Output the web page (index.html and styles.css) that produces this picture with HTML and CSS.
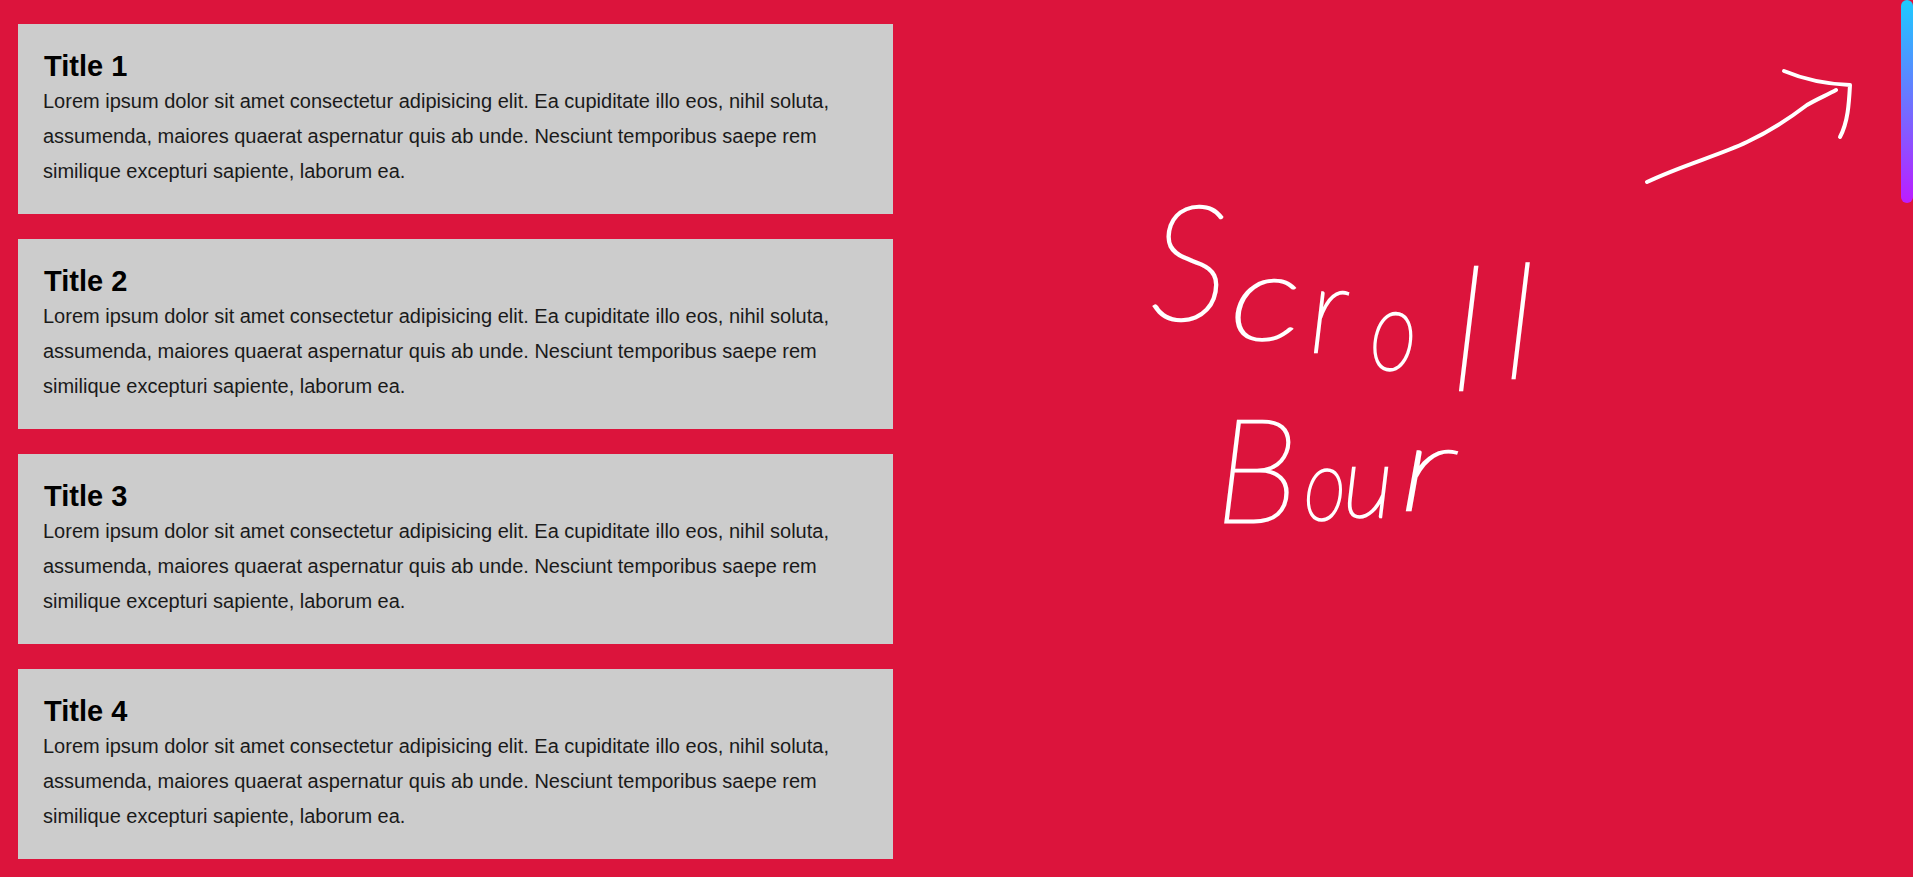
FILE: index.html
```html
<!DOCTYPE html>
<html lang="en">
<head>
<meta charset="utf-8">
<title>Scroll Bar</title>
<link rel="stylesheet" href="styles.css">
</head>
<body>
<main class="list">
  <article class="card"><h2 class="card-title">Title 1</h2><p class="card-text">Lorem ipsum dolor sit amet consectetur adipisicing elit. Ea cupiditate illo eos, nihil soluta, assumenda, maiores quaerat aspernatur quis ab unde. Nesciunt temporibus saepe rem similique excepturi sapiente, laborum ea.</p></article>
  <article class="card"><h2 class="card-title">Title 2</h2><p class="card-text">Lorem ipsum dolor sit amet consectetur adipisicing elit. Ea cupiditate illo eos, nihil soluta, assumenda, maiores quaerat aspernatur quis ab unde. Nesciunt temporibus saepe rem similique excepturi sapiente, laborum ea.</p></article>
  <article class="card"><h2 class="card-title">Title 3</h2><p class="card-text">Lorem ipsum dolor sit amet consectetur adipisicing elit. Ea cupiditate illo eos, nihil soluta, assumenda, maiores quaerat aspernatur quis ab unde. Nesciunt temporibus saepe rem similique excepturi sapiente, laborum ea.</p></article>
  <article class="card"><h2 class="card-title">Title 4</h2><p class="card-text">Lorem ipsum dolor sit amet consectetur adipisicing elit. Ea cupiditate illo eos, nihil soluta, assumenda, maiores quaerat aspernatur quis ab unde. Nesciunt temporibus saepe rem similique excepturi sapiente, laborum ea.</p></article>
</main>
<div class="thumb"></div>
<svg class="ink-arrow" width="1913" height="877" viewBox="0 0 1913 877" fill="none" aria-hidden="true">
  <path d="M1647 182C1680 166 1720 155 1747 142C1770 131 1790 118 1807 105C1817 99 1827 95 1836 90"/>
  <path d="M1784 71C1803 79 1825 84 1850 85C1849 103 1848 122 1840 137"/>
</svg>
<div class="word word-scroll"><span class="g-s">S</span><span class="g-c">c</span><span class="g-r">r</span><span class="g-o">o</span><span class="g-l1">l</span><span class="g-l2">l</span></div>
<div class="word word-bour"><span class="g-b">B</span><span class="g-o2">o</span><span class="g-u">u</span><span class="g-r2">r</span></div>
</body>
</html>
```
FILE: styles.css
```css
html, body {
  margin: 0;
  height: 100%;
  overflow: hidden;
}

body {
  background: #dc143c;
  font-family: "Liberation Sans", Arial, sans-serif;
}

.list {
  display: flex;
  flex-direction: column;
  gap: 25px;
  width: 875px;
  padding: 24px 0 0 18px;
}

.card {
  height: 190px;
  box-sizing: border-box;
  padding: 25px;
  background: #ccc;
}

.card-title {
  margin: 0;
  padding-left: 1px;
  font-size: 29px;
  line-height: 35px;
  font-weight: 700;
  color: #000;
}

.card-text {
  margin: 0;
  font-size: 20px;
  line-height: 35px;
  color: #1a1a1a;
}

.thumb {
  position: absolute;
  top: 0;
  right: 0;
  width: 12px;
  height: 203px;
  border-radius: 6px;
  background: linear-gradient(to bottom, #1ccbff, #bd1cff);
}

.ink-arrow {
  position: absolute;
  inset: 0;
  pointer-events: none;
}

.ink-arrow path {
  stroke: #fff;
  stroke-width: 4;
  stroke-linecap: round;
  stroke-linejoin: round;
}

.word {
  position: absolute;
  display: flex;
  align-items: baseline;
  font-family: Lato, "Noto Sans", sans-serif;
  font-weight: 100;
  font-style: italic;
  line-height: 0.75;
  color: #fff;
  -webkit-text-stroke: 2.5px #fff;
}

.word span {
  display: block;
  transform-origin: 0 100%;
}

.word-scroll { left: 1150px; top: 191px; }
.word-bour { left: 1215px; top: 412px; }

.g-s { font-size: 160px; }
.g-c { font-size: 120px; margin-left: 2px; transform: translateY(20px) scaleX(1.3); }
.g-r { font-size: 120px; margin-left: 24px; transform: translateY(32px); }
.g-o { font-size: 115px; margin-left: 23px; transform: translateY(50px) scaleX(0.8); }
.g-l1 { font-size: 170px; margin-left: 22px; transform: translateY(70px); }
.g-l2 { font-size: 158px; margin-left: 20px; transform: translateY(58px); }

.g-b { font-size: 145px; }
.g-o2 { font-size: 103px; margin-left: 6px; transform: translateY(-2px) scaleX(0.8); }
.g-u { font-size: 100px; margin-left: -14px; transform: translateY(-5px); }
.g-r2 { font-size: 118px; margin-left: 6px; transform: translateY(-12px) scaleX(1.5); }
```
